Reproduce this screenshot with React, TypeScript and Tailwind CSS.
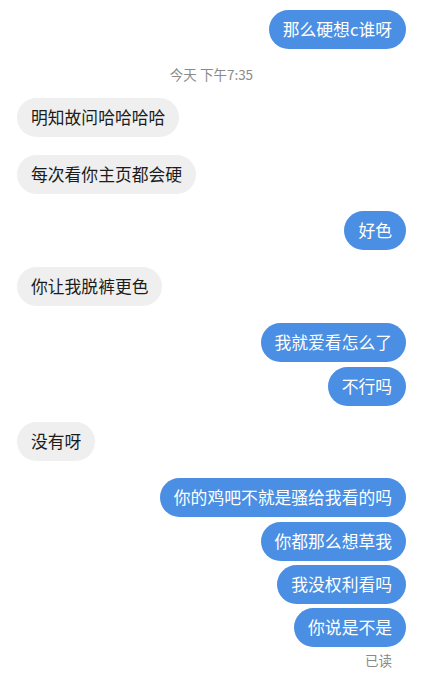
import React from "react";

type Msg = { side: "l" | "r"; text: string; gap: number };

const msgs: Msg[] = [
  { side: "l", text: "明知故问哈哈哈哈", gap: 0 },
  { side: "l", text: "每次看你主页都会硬", gap: 18 },
  { side: "r", text: "好色", gap: 17 },
  { side: "l", text: "你让我脱裤更色", gap: 17 },
  { side: "r", text: "我就爱看怎么了", gap: 17 },
  { side: "r", text: "不行吗", gap: 5 },
  { side: "l", text: "没有呀", gap: 16 },
  { side: "r", text: "你的鸡吧不就是骚给我看的吗", gap: 17 },
  { side: "r", text: "你都那么想草我", gap: 5 },
  { side: "r", text: "我没权利看吗", gap: 4 },
  { side: "r", text: "你说是不是", gap: 4 },
];

function Bubble({ m }: { m: Msg }) {
  const right = m.side === "r";
  return (
    <div
      className={right ? "flex justify-end" : "flex justify-start"}
      style={{ marginTop: m.gap }}
    >
      <div
        className={
          right
            ? "rounded-full bg-[#4a8fe3] text-white px-[14px] py-[8px] text-[16.8px] leading-[23px] whitespace-nowrap"
            : "rounded-full bg-[#efefef] text-[#1c1c1c] px-[14px] py-[8px] text-[16.8px] leading-[23px] whitespace-nowrap"
        }
      >
        {m.text}
      </div>
    </div>
  );
}

export default function App() {
  return (
    <div
      className="w-[421px] h-[680px] bg-white overflow-hidden pl-[17px] pr-[15px] pt-[10px]"
      style={{ fontFamily: '"Noto Sans CJK SC", "Noto Sans", sans-serif' }}
    >
      <div className="flex justify-end">
        <div className="rounded-full bg-[#4a8fe3] text-white px-[14px] py-[8px] text-[16.8px] leading-[23px] whitespace-nowrap">
          那么硬想c谁呀
        </div>
      </div>
      <div className="flex justify-center mt-[16px] mb-[15px] text-[13.5px] leading-[18px] text-[#8a8a8a]">
        今天 下午7:35
      </div>
      {msgs.map((m, i) => (
        <Bubble key={i} m={m} />
      ))}
      <div className="flex justify-end pr-[14px] mt-[4px] text-[13.5px] leading-[18px] text-[#8a8a8a]">
        已读
      </div>
    </div>
  );
}
